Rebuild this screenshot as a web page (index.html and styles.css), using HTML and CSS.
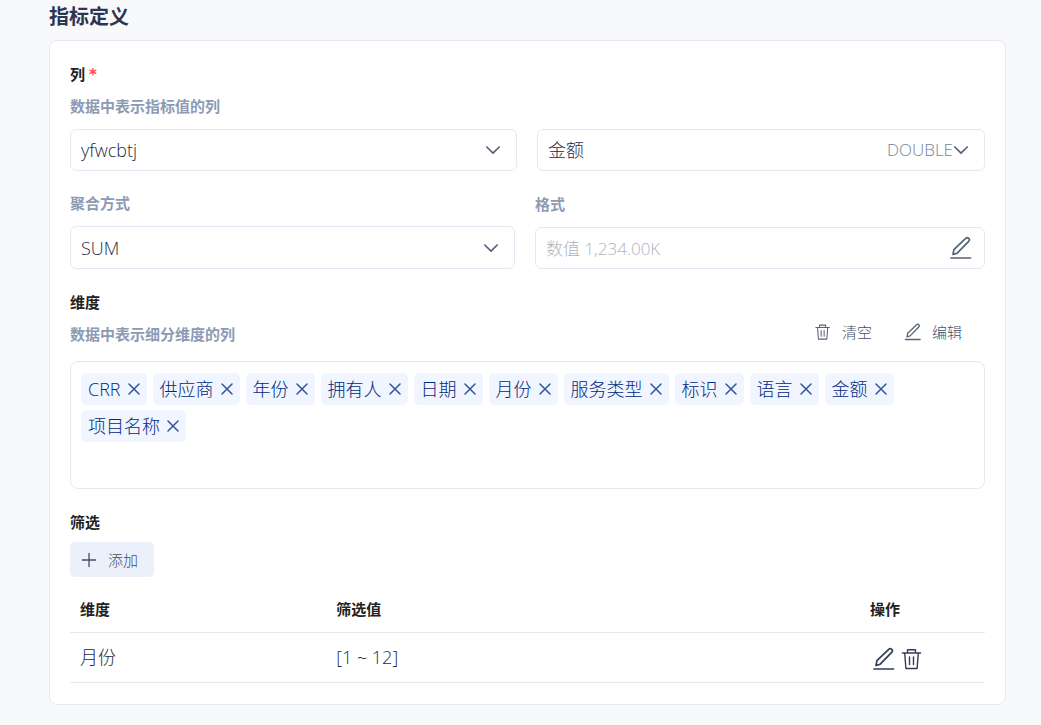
FILE: index.html
```html
<!DOCTYPE html>
<html lang="zh-CN">
<head>
<meta charset="utf-8">
<meta name="viewport" content="width=device-width, initial-scale=1">
<title>指标定义</title>
<link rel="stylesheet" href="styles.css">
</head>
<body>
<svg class="sprite" aria-hidden="true">
  <symbol id="chevron" viewBox="0 0 16 16"><path d="M1.8 5 8 11.2 14.2 5" fill="none" stroke="currentColor" stroke-width="1.7" stroke-linecap="round" stroke-linejoin="round"/></symbol>
  <symbol id="pencil" viewBox="0 0 24 24"><path d="M2 22h19.500M4 18.400l.9-4.700L16.700 2.300a2.100 2.100 0 0 1 3 3L8.200 17.200z" fill="none" stroke="currentColor" stroke-width="1.7" stroke-linecap="round" stroke-linejoin="round"/></symbol>
  <symbol id="trash" viewBox="0 0 24 24"><path d="M2.500 6h18M7.500 6V2.800h8V6M4.700 6l1.200 15.500h11.200L18.300 6M9.500 10v7.500M13.500 10v7.500" fill="none" stroke="currentColor" stroke-width="1.4" stroke-linecap="round" stroke-linejoin="round"/></symbol>
  <symbol id="cross" viewBox="0 0 12 12"><path d="M1 1l10 10M11 1 1 11" fill="none" stroke="currentColor" stroke-width="1.5" stroke-linecap="round"/></symbol>
  <symbol id="plus" viewBox="0 0 14 14"><path d="M7 0v14M0 7h14" fill="none" stroke="currentColor" stroke-width="1.3"/></symbol>
</svg>
<main class="page">
  <h1 class="page-title">指标定义</h1>
  <form class="card">
    <h2 class="label">列 <span class="required">*</span></h2>
    <label class="hint hint-block" for="source">数据中表示指标值的列</label>
    <div class="row row-columns">
      <div class="control">
        <select id="source" class="field"><option>yfwcbtj</option></select>
        <svg class="chevron"><use href="#chevron"/></svg>
      </div>
      <div class="control">
        <select class="field" aria-label="列"><option>金额</option></select>
        <span class="suffix">DOUBLE<svg class="suffix-chevron"><use href="#chevron"/></svg></span>
      </div>
    </div>
    <div class="row row-format">
      <div class="group">
        <label class="hint" for="aggregate">聚合方式</label>
        <div class="control">
          <select id="aggregate" class="field field-tall"><option>SUM</option></select>
          <svg class="chevron"><use href="#chevron"/></svg>
        </div>
      </div>
      <div class="group">
        <label class="hint" for="format">格式</label>
        <div class="control">
          <input id="format" class="field field-format" type="text" placeholder="数值 1,234.00K">
          <button class="icon-button format-edit" type="button" aria-label="编辑格式"><svg class="icon"><use href="#pencil"/></svg></button>
        </div>
      </div>
    </div>
    <div class="section-head">
      <div class="section-text">
        <h2 class="label">维度</h2>
        <p class="hint">数据中表示细分维度的列</p>
      </div>
      <div class="actions">
        <button class="text-button" type="button"><svg class="icon-small"><use href="#trash"/></svg>清空</button>
        <button class="text-button" type="button"><svg class="icon-small"><use href="#pencil"/></svg>编辑</button>
      </div>
    </div>
    <ul class="chips">
      <li class="chip">CRR<button class="remove" type="button" aria-label="移除 CRR"><svg><use href="#cross"/></svg></button></li>
      <li class="chip">供应商<button class="remove" type="button" aria-label="移除 供应商"><svg><use href="#cross"/></svg></button></li>
      <li class="chip">年份<button class="remove" type="button" aria-label="移除 年份"><svg><use href="#cross"/></svg></button></li>
      <li class="chip">拥有人<button class="remove" type="button" aria-label="移除 拥有人"><svg><use href="#cross"/></svg></button></li>
      <li class="chip">日期<button class="remove" type="button" aria-label="移除 日期"><svg><use href="#cross"/></svg></button></li>
      <li class="chip">月份<button class="remove" type="button" aria-label="移除 月份"><svg><use href="#cross"/></svg></button></li>
      <li class="chip">服务类型<button class="remove" type="button" aria-label="移除 服务类型"><svg><use href="#cross"/></svg></button></li>
      <li class="chip">标识<button class="remove" type="button" aria-label="移除 标识"><svg><use href="#cross"/></svg></button></li>
      <li class="chip">语言<button class="remove" type="button" aria-label="移除 语言"><svg><use href="#cross"/></svg></button></li>
      <li class="chip">金额<button class="remove" type="button" aria-label="移除 金额"><svg><use href="#cross"/></svg></button></li>
      <li class="chip">项目名称<button class="remove" type="button" aria-label="移除 项目名称"><svg><use href="#cross"/></svg></button></li>
    </ul>
    <h2 class="label">筛选</h2>
    <button class="add" type="button"><svg class="plus"><use href="#plus"/></svg>添加</button>
    <table class="filters">
      <thead><tr><th class="col-dimension">维度</th><th>筛选值</th><th class="col-actions">操作</th></tr></thead>
      <tbody><tr>
        <td>月份</td>
        <td>[1 ~ 12]</td>
        <td><div class="row-actions">
          <button class="icon-button" type="button" aria-label="编辑"><svg class="icon"><use href="#pencil"/></svg></button>
          <button class="icon-button" type="button" aria-label="删除"><svg class="icon"><use href="#trash"/></svg></button>
        </div></td>
      </tr></tbody>
    </table>
  </form>
</main>
</body>
</html>
```
FILE: styles.css
```css
* { box-sizing: border-box; }
body {
  margin: 0;
  background: #f8f9fb;
  color: #1f2a44;
  font: 300 18px/24px "Open Sans", "Noto Sans CJK SC", sans-serif;
}
h1, h2, p, ul { margin: 0; padding: 0; }
button, input, select { font: inherit; color: inherit; }
button { padding: 0; border: 0; background: none; cursor: pointer; }
svg { display: block; flex: none; }
.sprite { position: absolute; width: 0; height: 0; }
.page { padding: 5px 35px 20px 49px; }
.page-title { margin-bottom: 11px; font-size: 20px; line-height: 24px; font-weight: 700; color: #2d3550; }
.card { padding: 23px 20px 21px; background: #fff; border: 1px solid #e6e9f3; border-radius: 8px; }
.label { font-size: 15px; line-height: 20px; font-weight: 700; color: #222; }
.required { font-family: "DejaVu Sans", sans-serif; font-weight: 700; line-height: 16px; color: #ff4757; }
.hint { font-size: 15px; line-height: 20px; font-weight: 700; color: #8c9bb3; }
.hint-block { display: block; margin: 12px 0 13px; }
.row { display: grid; column-gap: 20px; }
.row-columns { grid-template-columns: 447fr 448fr; margin-bottom: 22px; }
.row-format { grid-template-columns: 445fr 450fr; align-items: end; margin-bottom: 23px; }
.group { display: flex; flex-direction: column; gap: 13px; }
.control { display: grid; align-items: center; }
.control > * { grid-area: 1 / 1; }
.field {
  width: 100%;
  height: 42px;
  padding: 0 10px;
  border: 1px solid #e6e9f3;
  border-radius: 6px;
  outline: 0;
  background: #fff;
  appearance: none;
}
.field-tall { height: 43px; }
.field-format { font-size: 17px; }
.field::placeholder { color: #b0b4be; opacity: 1; }
.chevron { width: 16px; height: 16px; margin-right: 16px; justify-self: end; color: #56627a; pointer-events: none; }
.suffix { display: flex; align-items: center; margin-right: 16px; justify-self: end; font-size: 17px; color: #74839c; pointer-events: none; }
.suffix-chevron { width: 16px; height: 16px; color: #56627a; }
.icon { width: 24px; height: 24px; }
.format-edit { margin-right: 12px; justify-self: end; color: #56627a; }
.section-head { display: flex; justify-content: space-between; align-items: flex-end; margin-bottom: 17px; }
.section-text { display: grid; gap: 12px; }
.actions { display: flex; gap: 32px; margin-right: 23px; }
.text-button { display: flex; align-items: center; gap: 10px; font-size: 15px; color: #424e68; }
.icon-small { width: 18px; height: 18px; color: #56627a; }
.chips {
  display: flex;
  flex-wrap: wrap;
  align-content: flex-start;
  gap: 5px 6px;
  min-height: 128px;
  margin-bottom: 23px;
  padding: 11px 10px;
  border: 1px solid #e6e9f3;
  border-radius: 8px;
  list-style: none;
}
.chip { display: flex; align-items: center; gap: 7px; height: 32px; padding: 0 7px; border-radius: 5px; background: #f0f5ff; color: #002a80; }
.remove svg { width: 12px; height: 12px; color: #30559c; }
.add { display: flex; align-items: center; gap: 12px; height: 35px; margin: 10px 0; padding: 0 16px 0 12px; border-radius: 5px; background: #ebf0fa; font-size: 15px; color: #424e68; }
.plus { width: 14px; height: 14px; }
.filters { width: 100%; border-collapse: collapse; table-layout: fixed; }
.filters th, .filters td { padding: 0 10px; border-bottom: 1px solid #e6e9f3; text-align: left; }
.filters th { height: 45px; font-size: 15px; font-weight: 700; color: #222; }
.filters td { height: 50px; }
.col-dimension { width: 28%; }
.col-actions { width: 125px; }
.row-actions { display: flex; gap: 4px; margin: 3px 0 0 2px; color: #333d55; }
```
